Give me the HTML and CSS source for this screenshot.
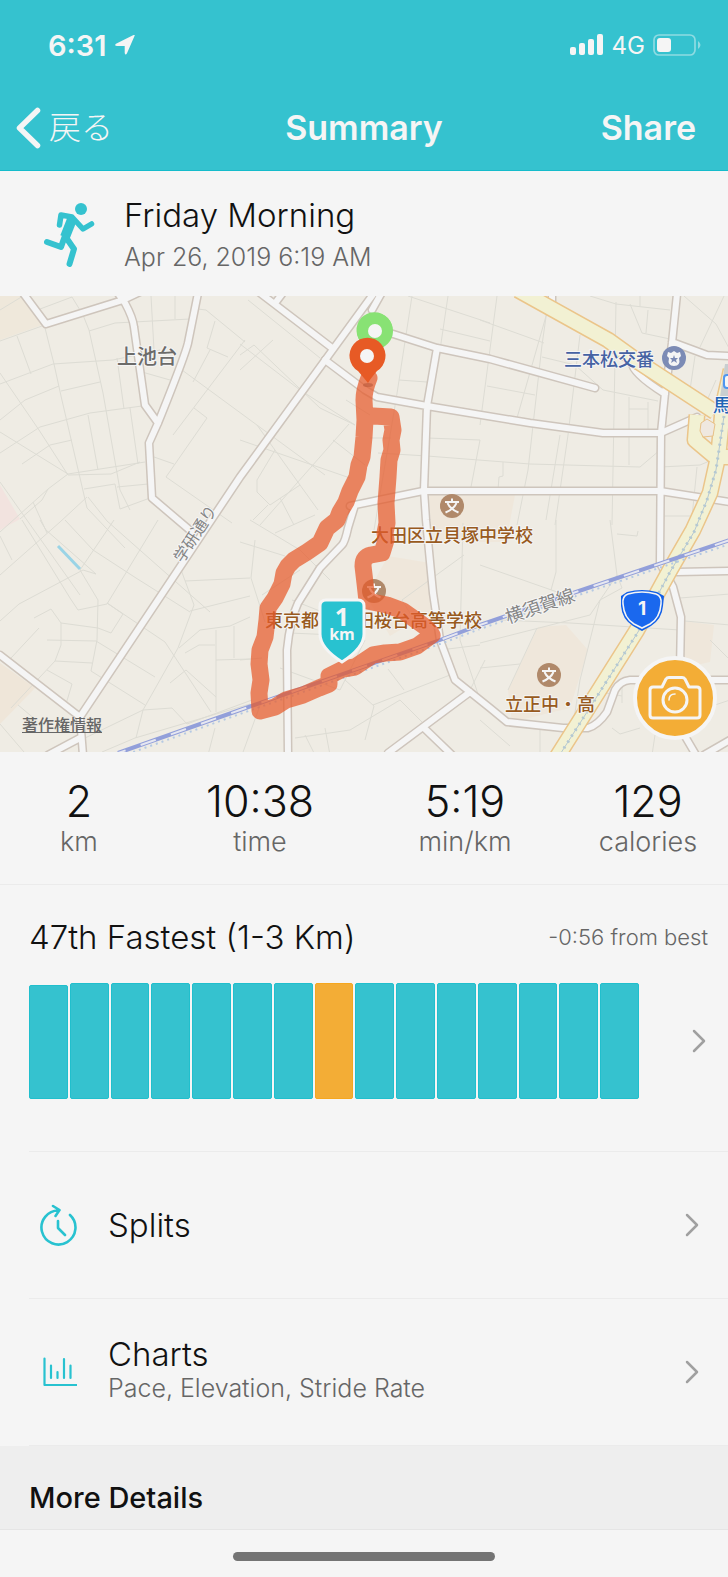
FILE: index.html
```html
<!DOCTYPE html>
<html lang="ja">
<head>
<meta charset="utf-8">
<meta name="viewport" content="width=device-width, initial-scale=1">
<title>Summary</title>
<link rel="stylesheet" href="styles.css">
</head>
<body>
<div class="screen">
  <header class="header">
    <div class="status">
      <div class="status-time">
        <span>6:31</span>
        <svg width="20" height="20" viewBox="0 0 20 20" aria-hidden="true"><path d="M19.500 1 12 18.300q-1.600 2.600-2.300-.3V11H2.200Q-1.200 10.700 1 8.700L17.500.4Q20.500-.8 19.500 1Z" fill="currentColor"/></svg>
      </div>
      <div class="status-signal">
        <svg width="34" height="22" viewBox="0 0 34 22" fill="currentColor" aria-hidden="true"><rect y="13" width="6" height="8" rx="2"/><rect x="9" y="9" width="6" height="12" rx="2"/><rect x="18" y="5" width="6" height="16" rx="2"/><rect x="27" width="6" height="21" rx="2"/></svg>
        <span class="network">4G</span>
        <svg width="48" height="22" viewBox="0 0 48 22" aria-hidden="true"><rect x="1" y="1" width="41" height="20" rx="5" fill="none" stroke="#8edbe2" stroke-width="1.700"/><path d="M45 7q5 4 0 8Z" fill="#8edbe2"/><rect x="4" y="4" width="14" height="14" rx="3" fill="currentColor"/></svg>
      </div>
    </div>
    <nav class="nav">
      <button class="nav-back" type="button">
        <svg width="25" height="42" viewBox="0 0 25 42" aria-hidden="true"><path d="M21.500 3.500 3.500 21l18 17.500" fill="none" stroke="currentColor" stroke-width="5.500" stroke-linecap="round" stroke-linejoin="round"/></svg>
        <span>戻る</span>
      </button>
      <h1 class="nav-title">Summary</h1>
      <button class="nav-share" type="button">Share</button>
    </nav>
  </header>

  <section class="activity">
    <svg class="runner" width="52" height="66" viewBox="0 0 52 66" aria-hidden="true">
      <circle cx="37" cy="8" r="6" fill="#35c2cf"/>
      <g fill="none" stroke="#35c2cf" stroke-linecap="round" stroke-linejoin="round">
        <path d="M15.500 24 17 14 28 16 39 28 47.500 23" stroke-width="5.500"/>
        <path d="M28.500 17 21 36" stroke-width="10" stroke-linecap="butt"/>
        <path d="M27 18 17 46 3 41M21 35l9 13-4.500 15" stroke-width="6"/>
      </g>
    </svg>
    <div>
      <h2 class="title">Friday Morning</h2>
      <p class="subtitle">Apr 26, 2019 6:19 AM</p>
    </div>
  </section>

  <section class="map" aria-label="Route map">
    <svg class="map-canvas" viewBox="0 296 728 456" role="img" aria-label="Run route">
      <defs>
        <g id="roads">
          <path d="M23 293 46 324 123 300 142 291M117 292 125 303Q133 318 134 327L145 405 158 423M198 293 188 343Q185 356 158 423L149 443 152 498 192 532M374 293 240 477 80 717 83 755M0 655 80 717M80 738 48 755M381 294 372 310"/>
          <path d="M260 293 332 348M282 294 276 302M325 360 365 390 377 397 427 406 530 423 603 433H661L697 417M390 333 437 348 490 359 595 388M437 348 427 406 424 490 426 520 433 593 440 640 455 680 490 708 507 722 563 728H588Q598 725 607 712L615 690Q620 681 630 680H730M470 692 388 753M423 727 452 755"/>
          <path d="M350 506 423 491H660L730 502M677 294 672 343 665 393 661 433 660 563 673 587 681 617 680 670 686 738 696 755M672 342 707 355 730 356M632 362Q630 372 665 394M552 294V305M677 572 730 571M704 755 730 740M355 505 348 528Q345 542 342 545L320 568 298 603Q290 620 287 650L288 755"/>
        </g>
        <g id="highway">
          <path d="M518 290 608 340 640 363 715 412M723 404 Q720 440 718 457L710 493 693 530 670 570 637 630 557 757M697 415 695 440 714 456M731 370 722 410M719 457H731"/>
        </g>
        <g id="school">
          <circle r="12" fill="#b0896a"/>
          <path d="M0-7.500V-4M-7-4H7M-4.500-3Q-2 3 6.500 6.500M4.500-3Q2 3-6.500 6.500" fill="none" stroke="#f5f5f5" stroke-width="2"/>
        </g>
      </defs>
      <rect y="296" width="728" height="456" fill="#efece4"/>
      <path d="M0 296H30L42 325 0 340Z" fill="#efe8db"/>
      <path d="M0 485 20 519 0 530Z" fill="#f2e3df"/>
      <path d="M0 663 35 688 0 724Z" fill="#efe6d9"/>
      <path d="M429 495H515L506 542 H432ZM388 556 430 563 433 610 390 636 366 596ZM538 627 566 625 588 650 570 708 512 722 508 690ZM683 621 714 625 710 662 683 668Z" fill="#efe7db"/>
      <g class="lane">
        <path d="M0 310 23 296M40 309 72 297 83 315 89 330 103 393 120 490 130 510M89 331 115 323 190 319M151 296 154 350M175 296V319M45 328 54 364 61 396 87 508 125 548M17 336 31 374M0 341 42 326M0 384 53 364 113 360 160 350M0 420 25 400 59 386M61 391 100 382M0 453 40 427 90 413 142 406M22 464 50 445 72 440M0 373 39 430 68 475 111 474 140 462M88 415 98 470M130 408 138 464M0 432 68 474 48 489 0 532"/>
        <path d="M68 474 145 462M84 489 115 484 120 509 150 498M117 487 148 484M88 497 107 521 210 612M33 502 47 533M20 519 42 500 48 489M87 497 60 522 0 575M117 358 124 409M142 372 170 380M154 457 174 464M198 309 206 310 245 342M215 321 207 348 228 357M210 350 193 382M245 340 173 435M182 370 325 475M194 408 207 418 166 477 232 523M0 482 80 595M240 344 300 390 355 425M240 370 273 340M248 300 320 358"/>
        <path d="M0 536 12 560M22 520 70 598M40 520 46 530 96 574 83 570 19 604 0 621M65 520 93 550 136 578 190 612M114 520 80 570 98 600 97 640 91 671 145 705M158 520 107 604 78 610 70 598M98 628 111 633 123 614 107 603M98 628 61 623 51 609 34 618M61 623 61 645 55 661 11 708 M47 640 96 641 155 677M107 603 165 642 211 712M55 661 92 663M39 628 11 658M47 670 72 684 66 704M180 567 194 605 178 648 143 710 136 738M185 581 250 578M190 611 250 596M179 648 200 630 230 626 250 617M185 653 199 645H215M216 630V712M234 626V658M216 660 250 659M170 683 186 670 216 697M85 738 143 710 172 708 187 724 252 700M102 752 135 738 250 704M215 728 208 755M0 724 24 752M18 705 36 720"/>
        <path d="M412 296 396 400 374 530M448 296 440 350M408 296 490 323M440 329 490 341M399 380 427 382M427 438 480 440 471 487M378 453 427 456 530 464 640 467 660 450M370 438H391M240 355 254 345 320 408 355 425M346 400 370 415 M349 424 260 525M257 425 300 485 318 510M275 450 257 480V492L270 505 300 485M280 498 294 525M253 520 268 505M240 440 350 478M333 440 365 465M497 296 480 425M515 425 550 302M547 310 542 345 528 470 517 525M480 320 544 343M542 357 575 365 603 390 658 401M580 335 568 435 555 525M616 302 612 525M590 296 616 304 670 310M640 296V306M630 304 642 333 670 339M648 310 646 333M487 386 535 395M498 490 499 477 503 476V462M560 435 546 520M629 397V465M629 409H648M648 402V430M660 467 700 465 712 460"/>
        <path d="M684 296 716 324 730 350M724 296 700 347M695 356 690 390M716 380 705 405M697 467 692 517M660 516H690M250 520 300 550 330 580M240 542 285 556M275 533 315 515M255 540 251 578 265 622M262 595 300 570M240 660 262 658M290 633 335 635M292 600 330 615 370 608M280 668 340 690 365 640M295 738 350 730 400 700 430 730M345 680 374 706 365 740M373 705 450 675M388 669 404 690M420 630 402 600 464 555M463 523 460 640 480 700M480 565 560 593M556 520V572L551 590M610 520 617 575 622 588 600 600 580 680 570 745M617 534 637 536 638 531M500 620 570 623 680 630M537 628 508 690M480 643 590 615 617 575M480 668 520 664M680 598 730 594M685 621 730 625M710 640 730 660M480 720 510 746M590 690 622 696M612 728 620 734 640 728M622 680V703M730 700 700 710M540 730V755M655 735 652 755M325 728 330 755M242 755 262 700M305 735 315 755M440 650 480 645M470 690 485 660"/>
      </g>
      <path d="M58 546 80 569" stroke="#9ad4e6" stroke-width="3"/>
      <use href="#roads" class="road-edge"/>
      <use href="#roads" class="road"/>
      <use href="#highway" class="highway-edge"/>
      <use href="#highway" class="highway"/>
      <path d="M701 423 707 419 715 424 713 436 703 437 700 431Z" fill="#efe8e0" stroke="#e8c188"/>
      <path d="M725 364 732 364V410H718Z" fill="#c8ced0"/>
      <path class="subway" d="M724 416 716 470 707 500 694 532 670 572 638 632 559 756"/>
      <path class="subway dots" d="M724 416 716 470 707 500 694 532 670 572 638 632 559 756"/>
      <path class="rail-shadow" d="M730 544 573 597 480 629 440 644 240 714 122 756"/>
      <path class="rail" d="M730 540 573 593 480 625 440 640 240 710 118 753"/>
      <path class="rail-gap" d="M730 540 573 593 480 625 440 640 240 710 118 753"/>
      <use href="#school" x="452" y="506"/>
      <use href="#school" x="374" y="591"/>
      <use href="#school" x="549" y="675"/>
      <circle cx="674" cy="358" r="12" fill="#7c8bb5"/>
      <path d="M668 352 671 353 674 351 677 353 680 352 681 356 679 358Q681 366 674 366T669 358L667 356Z" fill="#f5f5f5"/>
      <path d="m674 355 1 3h3l-2 2 1 3-3-2-3 2 1-3-2-2h3Z" fill="#7c8bb5"/>
      <rect x="724" y="375" width="18" height="13" rx="3" fill="#f5f5f5" stroke="#4f96ef" stroke-width="2"/>
      <g class="label">
        <text class="area" x="117" y="364">上池台</text>
        <text class="police" x="564" y="366">三本松交番</text>
        <text class="station" x="713" y="412">馬</text>
        <text class="place" x="371" y="542">大田区立貝塚中学校</text>
        <text class="place" x="265" y="627">東京都</text>
        <text class="place" x="356" y="627">田桜台高等学校</text>
        <text class="place" x="505" y="711">立正中・高</text>
        <text class="way" text-anchor="middle" transform="translate(542 612) rotate(-19)">横須賀線</text>
        <text class="street" text-anchor="middle" transform="translate(200 537) rotate(-57)">学研通り</text>
      </g>
      <g>
        <path d="M627 592Q642 588 657 592L664 596 663 606Q662 619 651 626L642 631 633 626Q622 619 621 606L621 596Z" fill="#1260e8"/>
        <path d="M628 594Q642 590 656 594 662 596 661 604 660 618 650 624L642 628 634 624Q624 618 623 604 622 596 628 594Z" fill="#1a68ee" stroke="#f5f5f5" stroke-width="1.600"/>
        <text class="shield-text" x="642" y="615" text-anchor="middle">1</text>
      </g>
      <path class="route" d="M369 378 Q364 390 364 400L365 420 364 437 362 457 359 465 357 477 350 491 346 502 340 512 337 520 327 528 320 543 307 552 294 560 288 566 284 573 282 584 275 598 268 608 267 620 265 637 260 650 259 664 261 680 259 693 260 711 275 707 286 700 303 695 319 688 329 684 329 676 343 669 355 667 373 655 385 653 400 652 417 646 432 635Q430 630 420 623L403 611 387 605 367 601 365 583 363 566Q363 557 371 555L382 553 386 540 385 533 387 523 386 503 388 477 389 460 392 450 391 440 393 430 391 417 373 416"/>
      <path d="M374 358 363 344A18 18 0 1 1 386 344Z" fill="#88e274"/>
      <circle cx="375" cy="331" r="18" fill="#88e274"/>
      <circle cx="375" cy="331" r="7" fill="#f5f5f5"/>
      <ellipse cx="368" cy="385" rx="5" ry="2" fill="#b9583a" opacity=".6"/>
      <path d="M368 383Q364 378 358 371A18 18 0 1 1 377 371Q371 378 368 383Z" fill="#e75a25"/>
      <circle cx="367" cy="356" r="7" fill="#f5f5f5"/>
      <path d="M326 600H358Q364 600 364 606V634Q364 648 342 662 320 648 320 634V606Q320 600 326 600Z" fill="#28c2d0" stroke="#f5f5f5" stroke-width="3"/>
      <text class="marker-number" x="342" y="626" text-anchor="middle">1</text>
      <text class="marker-unit" x="342" y="640" text-anchor="middle">km</text>
    </svg>
    <a class="copyright" href="#copyright">著作権情報</a>
    <button class="camera" type="button" aria-label="Add photo">
      <svg width="54" height="44" viewBox="0 0 54 44" fill="none" stroke="#f5f5f5" stroke-width="3" stroke-linecap="round" stroke-linejoin="round" aria-hidden="true"><path d="M5 11H14L18 3Q19 1.500 21 1.500H34Q36 1.500 37 3L41 11H49Q52 11 52 14V39Q52 42 49 42H5Q2 42 2 39V14Q2 11 5 11Z"/><circle cx="27" cy="24" r="12"/><path d="M21 24Q21 18 27 18" stroke-width="1.600"/></svg>
    </button>
  </section>

  <dl class="stats">
    <div class="stat"><dd>2</dd><dt>km</dt></div>
    <div class="stat"><dd>10:38</dd><dt>time</dt></div>
    <div class="stat"><dd>5:19</dd><dt>min/km</dt></div>
    <div class="stat"><dd>129</dd><dt>calories</dt></div>
  </dl>

  <section class="ranking">
    <div class="ranking-head">
      <h2 class="title">47th Fastest (1-3 Km)</h2>
      <span class="best">-0:56 from best</span>
    </div>
    <a class="ranking-body" href="#ranking" aria-label="Ranking details">
      <span class="bars">
        <i class="bar short"></i><i class="bar"></i><i class="bar"></i><i class="bar"></i><i class="bar"></i><i class="bar"></i><i class="bar"></i><i class="bar current"></i><i class="bar"></i><i class="bar"></i><i class="bar"></i><i class="bar"></i><i class="bar"></i><i class="bar"></i><i class="bar"></i>
      </span>
      <svg class="chevron" width="14" height="24" viewBox="0 0 14 24" aria-hidden="true"><path d="m2 2 10 10L2 22"/></svg>
    </a>
  </section>

  <a class="row" href="#splits">
    <svg class="row-icon" width="38" height="42" viewBox="0 0 38 42" aria-hidden="true"><path d="M31 11A17 17 0 1 1 20 6.500M14 2 20.500 6 16.500 12M19 17V24L26 31" stroke-width="2.600"/></svg>
    <span class="title">Splits</span>
    <svg class="chevron" width="14" height="24" viewBox="0 0 14 24" aria-hidden="true"><path d="m2 2 10 10L2 22"/></svg>
  </a>
  <a class="row" href="#charts">
    <svg class="row-icon" width="38" height="30" viewBox="0 0 38 30" aria-hidden="true"><path d="M5.500 1.500V28H38M12 8.500V21M18.500 15V21M25 2V21M31.500 8.500V21" stroke-width="2.200"/></svg>
    <span class="row-text"><span class="title">Charts</span><span class="subtitle">Pace, Elevation, Stride Rate</span></span>
    <svg class="chevron" width="14" height="24" viewBox="0 0 14 24" aria-hidden="true"><path d="m2 2 10 10L2 22"/></svg>
  </a>
  <h2 class="more">More Details</h2>
  <footer class="home"><span class="home-bar"></span></footer>
</div>
</body>
</html>
```

FILE: styles.css
```css
* { box-sizing: border-box; }

body {
  margin: 0;
  background: #f5f5f5;
  color: #111;
  font-family: Inter, "Noto Sans CJK JP", sans-serif;
  font-weight: 300;
}

h1, h2, p, dl, dd { margin: 0; }
button { padding: 0; border: 0; background: none; color: inherit; font: inherit; }
a { color: inherit; text-decoration: none; }
svg { display: block; flex: none; }

.header {
  padding: 24px 16px 14px;
  border-bottom: 1px solid #15bccb;
  background: #35c2cf;
  color: #f5f5f5;
}

.status {
  display: flex;
  justify-content: space-between;
  height: 42px;
  padding: 0 11px 0 32px;
}

.status-time, .status-signal { display: flex; align-items: center; gap: 8px; }
.status-time { font-size: 29px; font-weight: 600; }
.network { font-size: 24px; font-weight: 400; }

.nav {
  display: grid;
  grid-template-columns: 1fr auto 1fr;
  align-items: center;
  height: 56px;
  margin-top: 34px;
}

.nav-back { display: flex; align-items: center; gap: 8px; font-size: 32px; line-height: 44px; }
.nav-title, .nav-share { font-size: 34px; font-weight: 600; line-height: 44px; }
.nav-share { justify-self: end; padding-right: 16px; }

.title { font-size: 33px; font-weight: 300; line-height: 40px; }
.subtitle { color: #666; font-size: 25px; line-height: 32px; }

.activity {
  display: flex;
  align-items: center;
  gap: 28px;
  height: 125px;
  padding-left: 44px;
}
.activity .subtitle { margin-top: 6px; }

.map { position: relative; overflow: hidden; }
.map-canvas { width: 100%; height: auto; }
.lane { fill: none; stroke: #dddcd4; stroke-width: 1; }
.road-edge, .road { fill: none; stroke-linecap: round; stroke-linejoin: round; }
.road-edge { stroke: #cec5bc; stroke-width: 9; }
.road { stroke: #f5f5f5; stroke-width: 6; }
.highway-edge, .highway { fill: none; stroke-linejoin: round; }
.highway-edge { stroke: #ebc58a; stroke-width: 17; }
.highway { stroke: #f2f1d3; stroke-width: 14; }
.subway { fill: none; stroke: #b4c8d2; stroke-width: 1; }
.dots { stroke-width: 3; stroke-dasharray: 2 5; }
.rail, .rail-gap, .rail-shadow { fill: none; }
.rail { stroke: #929fda; stroke-width: 4; }
.rail-gap { stroke: #e6e7f1; stroke-width: 2; stroke-dasharray: 16 16; }
.rail-shadow { stroke: #b5c9e3; stroke-width: 2; stroke-dasharray: 2 4; }
.route {
  fill: none;
  stroke: #e65a2b;
  stroke-width: 17;
  stroke-linecap: round;
  stroke-linejoin: round;
  opacity: .72;
}

.label {
  font-family: "Noto Sans CJK JP", sans-serif;
  font-size: 18px;
  font-weight: 500;
  paint-order: stroke;
  stroke: #f5f5f5;
  stroke-width: 2px;
  stroke-linejoin: round;
}
.area { fill: #6c6b69; font-size: 20px; }
.police { fill: #4662a3; }
.station { fill: #2063b6; }
.place { fill: #985a20; }
.way, .street { fill: #858585; font-weight: 400; }
.street { font-size: 16px; }
.shield-text { fill: #f5f5f5; font-size: 19px; font-weight: 700; }
.marker-number, .marker-unit { fill: #f5f5f5; font-family: "Open Sans", sans-serif; font-weight: 700; }
.marker-number { font-size: 25px; }
.marker-unit { font-size: 16px; }

.copyright {
  position: absolute;
  left: 22px;
  bottom: 15px;
  color: #666;
  font-size: 16px;
  font-weight: 500;
  line-height: 24px;
  text-decoration: underline;
}

.camera {
  position: absolute;
  right: 11px;
  bottom: 12px;
  display: grid;
  place-items: center;
  width: 84px;
  height: 84px;
  border: 4px solid #f5f5f5;
  border-radius: 50%;
  background: #f3ad36;
}

.stats {
  display: grid;
  grid-template-columns: 158fr 204fr 206fr 160fr;
  padding: 25px 0 26px;
  border-bottom: 1px solid #ebebeb;
  text-align: center;
}
.stat dd { font-size: 43px; line-height: 48px; }
.stat dt { color: #666; font-size: 27px; line-height: 33px; }

.ranking { margin-left: 29px; padding-top: 32px; border-bottom: 1px solid #ebebeb; }
.ranking-head { display: flex; align-items: center; justify-content: space-between; padding-right: 20px; }
.best { color: #666; font-size: 22px; }
.ranking-body { display: flex; align-items: center; justify-content: space-between; padding: 26px 22px 52px 0; }
.bars { display: flex; align-items: flex-end; gap: 2px; flex: 1; height: 116px; margin-right: 53px; }
.bar { flex: 1; height: 116px; border: 1px solid #20bfcd; border-radius: 2px; background: #35c2cf; }
.short { height: 114px; }
.current { border-color: #f6a71e; background: #f3ad36; }
.chevron { fill: none; stroke: #a0a0a0; stroke-width: 2.5px; stroke-linecap: round; stroke-linejoin: round; }

.row {
  display: flex;
  align-items: center;
  height: 147px;
  margin-left: 29px;
  padding: 0 29px 0 10px;
  border-bottom: 1px solid #ebebeb;
}
.row .chevron { margin-left: auto; }
.row-icon { margin-right: 31px; fill: none; stroke: #28c2d0; stroke-linecap: round; stroke-linejoin: round; }
.row-text { display: flex; flex-direction: column; padding-bottom: 8px; }
.row-text .subtitle { line-height: 28px; }

.more {
  padding: 32px 29px 11px;
  border-bottom: 1px solid #e5e5e5;
  background: #eee;
  font-size: 29px;
  font-weight: 500;
  line-height: 40px;
}

.home { display: grid; justify-items: center; padding: 22px 0 16px; }
.home-bar { width: 36%; height: 9px; border-radius: 5px; background: #747474; }
```
